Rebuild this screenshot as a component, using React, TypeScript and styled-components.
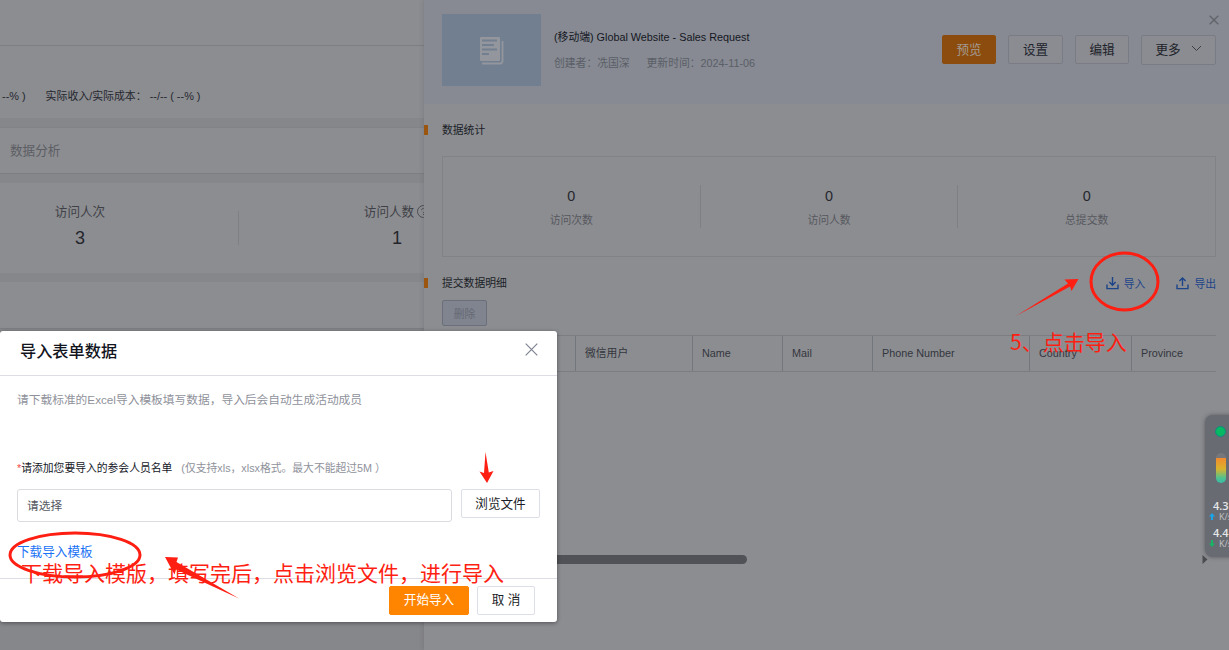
import React from "react";
import styled, { createGlobalStyle } from "styled-components";

const Global = createGlobalStyle`
  * { box-sizing: border-box; }
  body { margin: 0; overflow: hidden; background: #86878b; }
  #root { font-family: "Liberation Sans", "Noto Sans CJK SC", sans-serif; font-size: 10.8px; color: #1d2028; }
`;

const Screen = styled.div`
  position: relative;
  display: flex;
  width: 1229px;
  height: 650px;
  overflow: hidden;
  white-space: nowrap;
`;

/* Page behind the drawer */
const Page = styled.div`
  width: 424px;
  flex: none;
  display: flex;
  flex-direction: column;
  background: #86878b;
  overflow: hidden;
`;
const Block = styled.div<{ $h: number; $gap?: number; $line?: boolean; $top?: boolean }>`
  flex: none;
  height: ${(p) => p.$h}px;
  margin-bottom: ${(p) => p.$gap ?? 0}px;
  background: #8c8d91;
  border-bottom: ${(p) => (p.$line ? "1px solid #7d7e83" : "none")};
  border-top: ${(p) => (p.$top ? "1px solid #828387" : "none")};
  display: flex;
  align-items: center;
`;
const Cost = styled.span<{ $ml: number }>`
  margin-left: ${(p) => p.$ml}px;
  margin-top: 28px;
  line-height: 16px;
  font-size: 10.9px;
  color: #24272e;
`;
const TabText = styled.span`
  margin-left: 10px;
  padding-bottom: 3px;
  font-size: 12.6px;
  color: #5c5e64;
`;
const Visit = styled.div<{ $ml: number; $w: number }>`
  flex: none;
  width: ${(p) => p.$w}px;
  margin-left: ${(p) => p.$ml}px;
  padding-bottom: 5px;
  display: flex;
  flex-direction: column;
  align-items: center;
`;
const VisitLabel = styled.div`
  font-size: 12.6px;
  line-height: 20px;
  color: #3f4147;
  display: flex;
  align-items: center;
  gap: 3px;
`;
const VisitNum = styled.div`
  font-size: 18px;
  line-height: 24px;
  margin-top: 4px;
  color: #24262c;
`;
const VRule = styled.i<{ $h: number; $ml?: number }>`
  flex: none;
  width: 1px;
  height: ${(p) => p.$h}px;
  margin-left: ${(p) => p.$ml ?? 0}px;
  background: #7e8084;
`;

/* Drawer */
const Drawer = styled.div`
  position: relative;
  width: 805px;
  flex: none;
  display: flex;
  flex-direction: column;
  background: #8c8d91;
  box-shadow: -1px 0 4px rgba(40, 42, 50, 0.14);
`;
const Head = styled.div`
  height: 104px;
  flex: none;
  background: #878a92;
  display: flex;
  align-items: flex-start;
  padding: 14px 13px 0 18px;
`;
const Thumb = styled.div`
  width: 99px;
  height: 72px;
  background: #727f90;
  display: flex;
  align-items: center;
  justify-content: center;
`;
const Info = styled.div`
  flex: 1;
  margin-left: 13px;
  padding-top: 15px;
`;
const Title = styled.div`
  line-height: 16px;
  color: #14171f;
`;
const Meta = styled.div`
  display: flex;
  gap: 17px;
  margin-top: 10px;
  line-height: 16px;
  color: #5a5e67;
`;
const Actions = styled.div`
  flex: none;
  display: flex;
  gap: 12px;
  padding-top: 21px;
`;
const HeadBtn = styled.div<{ $w: number; $h?: number; $primary?: boolean }>`
  width: ${(p) => p.$w}px;
  height: ${(p) => p.$h ?? 29}px;
  border: 1px solid ${(p) => (p.$primary ? "#8c4c0d" : "#797c84")};
  background: ${(p) => (p.$primary ? "#8c4c0d" : "#8b8c91")};
  color: ${(p) => (p.$primary ? "#a39b93" : "#20232b")};
  border-radius: 2px;
  padding-bottom: 3px;
  font-size: 12.6px;
  display: flex;
  align-items: center;
  justify-content: center;
  gap: 10px;
`;
const DrawerClose = styled.div`
  position: absolute;
  right: 10px;
  top: 15px;
  line-height: 0;
`;
const Section = styled.div<{ $mt: number }>`
  display: flex;
  align-items: center;
  height: 16px;
  margin-top: ${(p) => p.$mt}px;
  flex: none;
  padding-right: 13px;
`;
const Mark = styled.i`
  width: 4px;
  height: 10px;
  background: #9c550f;
`;
const SectionTitle = styled.span`
  flex: 1;
  margin-left: 14px;
  padding-bottom: 2px;
  color: #1b1e26;
`;
const Tool = styled.span`
  display: flex;
  align-items: center;
  gap: 5px;
  margin-left: 31px;
  color: #1c4489;
`;
const Stats = styled.div`
  margin: 18px 13px 0 18px;
  height: 101px;
  flex: none;
  border: 1px solid #808286;
  display: flex;
  align-items: center;
`;
const Stat = styled.div`
  flex: 1;
  display: flex;
  flex-direction: column;
  align-items: center;
`;
const StatNum = styled.div`
  font-size: 14.4px;
  line-height: 20px;
  color: #25272d;
`;
const StatLabel = styled.div`
  line-height: 16px;
  margin-top: 6px;
  color: #56585e;
`;
const Delete = styled.div`
  flex: none;
  width: 45px;
  height: 26px;
  margin: 9px 0 0 18px;
  padding-bottom: 1px;
  border: 1px solid #6a6f7b;
  border-radius: 2px;
  background: #80848f;
  color: #666a75;
  display: flex;
  align-items: center;
  justify-content: center;
`;
const Table = styled.div`
  flex: none;
  height: 37px;
  margin: 9px 13px 0 18px;
  border-top: 1px solid #7b7d82;
  border-bottom: 1px solid #7b7d82;
  display: flex;
  color: #33363d;
`;
const Cell = styled.div<{ $w: number }>`
  flex: none;
  width: ${(p) => p.$w}px;
  border-left: 1px solid #74767e;
  padding-left: 9px;
  line-height: 35px;
  &:first-child { border-left: 0; }
`;
const Scroll = styled.div`
  flex: none;
  display: flex;
  justify-content: space-between;
  align-items: center;
  margin-top: 183px;
  padding-right: 21px;
`;
const Thumbbar = styled.i`
  width: 323px;
  height: 9px;
  border-radius: 5px;
  background: #515257;
`;

/* Import dialog, floating over the page */
const Dialog = styled.div`
  position: absolute;
  left: 0;
  top: 331px;
  width: 557px;
  height: 291px;
  background: #fff;
  border-radius: 3px;
  box-shadow: 0 1px 4px rgba(0, 0, 0, 0.4);
  display: flex;
  flex-direction: column;
`;
const DialogHead = styled.div`
  height: 45px;
  flex: none;
  border-bottom: 1px solid #dddee5;
  padding: 0 19px 7px 20px;
  display: flex;
  align-items: center;
  justify-content: space-between;
  font-size: 16.2px;
  font-weight: 500;
  color: #12151d;
`;
const DialogBody = styled.div`
  flex: 1;
  padding: 15px 17px 0;
  display: flex;
  flex-direction: column;
  align-items: flex-start;
`;
const Hint = styled.div`
  font-size: 11.73px;
  line-height: 18px;
  color: #8f929b;
`;
const FieldLabel = styled.div`
  margin-top: 51px;
  line-height: 16px;
  color: #14171f;
  display: flex;
`;
const Star = styled.b`
  font-weight: 400;
  color: #f5453f;
`;
const Note = styled.span`
  margin-left: 9px;
  color: #8f929b;
`;
const FileRow = styled.div`
  display: flex;
  align-items: flex-start;
  gap: 9px;
  margin-top: 13px;
`;
const FileInput = styled.div`
  width: 435px;
  height: 33px;
  border: 1px solid #d9dbe0;
  border-radius: 3px;
  padding-left: 9px;
  line-height: 32px;
  font-size: 11.7px;
  color: #55585f;
`;
const Btn = styled.div<{ $w: number; $primary?: boolean; $lh?: number }>`
  width: ${(p) => p.$w}px;
  height: 29px;
  border: 1px solid ${(p) => (p.$primary ? "#ff8400" : "#dddfe8")};
  background: ${(p) => (p.$primary ? "#ff8400" : "#fff")};
  color: ${(p) => (p.$primary ? "#fff" : "#1b1e28")};
  border-radius: 2px;
  font-size: 12.6px;
  line-height: ${(p) => p.$lh ?? 27}px;
  text-align: center;
`;
const Link = styled.div`
  margin: 20px 0 0 0;
  font-size: 12.6px;
  line-height: 20px;
  color: #1a73f5;
`;
const DialogFoot = styled.div`
  height: 44px;
  flex: none;
  border-top: 1px solid #dddee5;
  padding: 7px 22px 0 0;
  display: flex;
  justify-content: flex-end;
  gap: 8px;
`;

/* Network speed widget docked at the right edge */
const Widget = styled.div`
  position: absolute;
  left: 1205px;
  top: 415px;
  width: 34px;
  height: 142px;
  border-radius: 8px;
  background: #686b72;
  box-shadow: 0 0 4px rgba(40, 42, 48, 0.5);
  padding-top: 11px;
  display: flex;
  flex-direction: column;
  color: #e6e7e9;
`;
const Dot = styled.i`
  width: 11px;
  height: 11px;
  margin-left: 10px;
  border-radius: 50%;
  background: #06b962;
  border: 1px solid #128a7e;
`;
const Gauge = styled.i`
  width: 10px;
  height: 30px;
  margin: 16px 0 16px 11px;
  border-radius: 5px;
  background: linear-gradient(#76777c 0 5px, #f28a2e 5px, #d9b32c 16px, #4fc28f 25px, #36bda6);
`;
const Speed = styled.div`
  height: 27px;
  padding-left: 8px;
  font-family: "Open Sans", sans-serif;
  font-weight: 600;
  font-size: 11px;
  line-height: 13px;
`;
const Unit = styled.div`
  display: flex;
  align-items: center;
  gap: 4px;
  margin-left: -4px;
  font-size: 9px;
  line-height: 9px;
  font-weight: 400;
  color: #c3c5c9;
`;

/* Red annotations */
const Marks = styled.svg`
  position: absolute;
  inset: 0;
`;
const RedNote = styled.div<{ $x: number; $y: number }>`
  position: absolute;
  left: ${(p) => p.$x}px;
  top: ${(p) => p.$y}px;
  font-family: "Noto Sans CJK SC", sans-serif;
  font-size: 21px;
  line-height: 28px;
  color: #ff1e12;
`;

const TrayIcon = ({ up }: { up?: boolean }) => (
  <svg width="13" height="13" viewBox="0 0 13 13" fill="none" stroke="#1c4489" strokeWidth="1.4">
    <path d="M1 7.5V11.6H12V7.5" />
    <path d={up ? "M6.5 9V1.2M3.4 4L6.5 1L9.6 4" : "M6.5 0V8M3.4 5.1L6.5 8.2L9.6 5.1"} />
  </svg>
);

const SpeedUnit = ({ up }: { up?: boolean }) => (
  <Unit>
    <svg width="6" height="7" viewBox="0 0 6 7">
      <path d={up ? "M3 0L6 3.5H4V7H2V3.5H0Z" : "M3 7L0 3.5H2V0H4V3.5H6Z"} fill={up ? "#1ba4e8" : "#18b566"} />
    </svg>
    K/s
  </Unit>
);

const columns: [string, number][] = [
  ["", 133],
  ["微信用户", 117],
  ["Name", 90],
  ["Mail", 90],
  ["Phone Number", 157],
  ["Country", 102],
  ["Province", 85],
];

export default function App() {
  return (
    <Screen>
      <Global />
      <Page>
        <Block $h={46} $line />
        <Block $h={72} $gap={9}>
          <Cost $ml={2}>--% )</Cost>
          <Cost $ml={20}>实际收入/实际成本： --/-- ( --% )</Cost>
        </Block>
        <Block $h={47} $gap={9} $line $top>
          <TabText>数据分析</TabText>
        </Block>
        <Block $h={90} $gap={9}>
          <Visit $ml={40} $w={80}>
            <VisitLabel>访问人次</VisitLabel>
            <VisitNum>3</VisitNum>
          </Visit>
          <VRule $h={34} $ml={118} />
          <Visit $ml={117} $w={82}>
            <VisitLabel>
              访问人数
              <svg width="13" height="13" viewBox="0 0 13 13" fill="none" stroke="#4c4e54">
                <circle cx="6.5" cy="6.5" r="6" />
                <path d="M4.6 5.2C4.6 2.8 8.4 2.8 8.4 5.2C8.4 6.4 6.5 6.5 6.5 8M6.5 9V10" />
              </svg>
            </VisitLabel>
            <VisitNum>1</VisitNum>
          </Visit>
        </Block>
        <Block $h={47} $line />
      </Page>

      <Drawer>
        <Head>
          <Thumb>
            <svg width="25" height="29" viewBox="0 0 25 29">
              <rect x="1" y="1" width="20" height="24" rx="1" fill="#93969d" />
              <path d="M3 4.5H18M3 9H15M3 13.5H18M3 18H10" stroke="#727f90" strokeWidth="1.8" />
              <path d="M23.5 5V25C23.5 26.5 22.5 27.5 21 27.5H3" fill="none" stroke="#93969d" strokeWidth="1.8" />
            </svg>
          </Thumb>
          <Info>
            <Title>(移动端) Global Website - Sales Request</Title>
            <Meta>
              <span>创建者：冼国深</span>
              <span>更新时间：2024-11-06</span>
            </Meta>
          </Info>
          <Actions>
            <HeadBtn $w={54} $primary>预览</HeadBtn>
            <HeadBtn $w={55}>设置</HeadBtn>
            <HeadBtn $w={54}>编辑</HeadBtn>
            <HeadBtn $w={75} $h={30}>
              更多
              <svg width="11" height="7" viewBox="0 0 11 7" fill="none" stroke="#3b3e46">
                <path d="M1 1L5.5 5.5L10 1" />
              </svg>
            </HeadBtn>
          </Actions>
        </Head>
        <DrawerClose>
          <svg width="10" height="10" viewBox="0 0 10 10" stroke="#62656c" strokeWidth="1.5">
            <path d="M0.7 0.7L9.3 9.3M9.3 0.7L0.7 9.3" />
          </svg>
        </DrawerClose>

        <Section $mt={18}>
          <Mark />
          <SectionTitle>数据统计</SectionTitle>
        </Section>
        <Stats>
          <Stat>
            <StatNum>0</StatNum>
            <StatLabel>访问次数</StatLabel>
          </Stat>
          <VRule $h={43} />
          <Stat>
            <StatNum>0</StatNum>
            <StatLabel>访问人数</StatLabel>
          </Stat>
          <VRule $h={43} />
          <Stat>
            <StatNum>0</StatNum>
            <StatLabel>总提交数</StatLabel>
          </Stat>
        </Stats>
        <Section $mt={18}>
          <Mark />
          <SectionTitle>提交数据明细</SectionTitle>
          <Tool><TrayIcon />导入</Tool>
          <Tool><TrayIcon up />导出</Tool>
        </Section>
        <Delete>删除</Delete>
        <Table>
          {columns.map(([name, w], i) => (
            <Cell key={i} $w={w}>{name}</Cell>
          ))}
        </Table>
        <Scroll>
          <Thumbbar />
          <svg width="6" height="9" viewBox="0 0 6 9"><path d="M0.5 0L5.5 4.5L0.5 9Z" fill="#4b4c50" /></svg>
        </Scroll>
      </Drawer>

      <Widget>
        <Dot />
        <Gauge />
        <Speed>4.3<SpeedUnit up /></Speed>
        <Speed>4.4<SpeedUnit /></Speed>
      </Widget>

      <Dialog>
        <DialogHead>
          导入表单数据
          <svg width="13" height="13" viewBox="0 0 13 13" stroke="#7d8291" strokeWidth="1.2">
            <path d="M0.7 0.7L12.3 12.3M12.3 0.7L0.7 12.3" />
          </svg>
        </DialogHead>
        <DialogBody>
          <Hint>请下载标准的Excel导入模板填写数据，导入后会自动生成活动成员</Hint>
          <FieldLabel>
            <Star>*</Star>请添加您要导入的参会人员名单
            <Note>(仅支持xls，xlsx格式。最大不能超过5M ）</Note>
          </FieldLabel>
          <FileRow>
            <FileInput>请选择</FileInput>
            <Btn $w={79} $lh={29}>浏览文件</Btn>
          </FileRow>
          <Link>下载导入模板</Link>
        </DialogBody>
        <DialogFoot>
          <Btn $w={80} $primary>开始导入</Btn>
          <Btn $w={58}>取 消</Btn>
        </DialogFoot>
      </Dialog>

      <RedNote $x={1010} $y={327}>5、点击导入</RedNote>
      <RedNote $x={21} $y={558}>下载导入模版，填写完后，点击浏览文件，进行导入</RedNote>
      <Marks width="1229" height="650" fill="none">
        <ellipse cx="1124.5" cy="281.5" rx="33.5" ry="28.5" stroke="#ff1e12" strokeWidth="3" />
        <ellipse cx="75" cy="555" rx="65" ry="22" stroke="#ff1e12" strokeWidth="3" />
        <path d="M1016 316L1068 283.5L1064.5 279.5L1078.5 279L1071.5 291L1070 286.5Z" fill="#ff1e12" />
        <path d="M239 598.5L176 569.5L174.5 574.5L165 557L178 557.5L176.5 562Z" fill="#ff1e12" />
        <path d="M485.5 452L488.8 472.5L493.5 471L487 483L479.5 471.5L484 473Z" fill="#ff1e12" />
      </Marks>
    </Screen>
  );
}
